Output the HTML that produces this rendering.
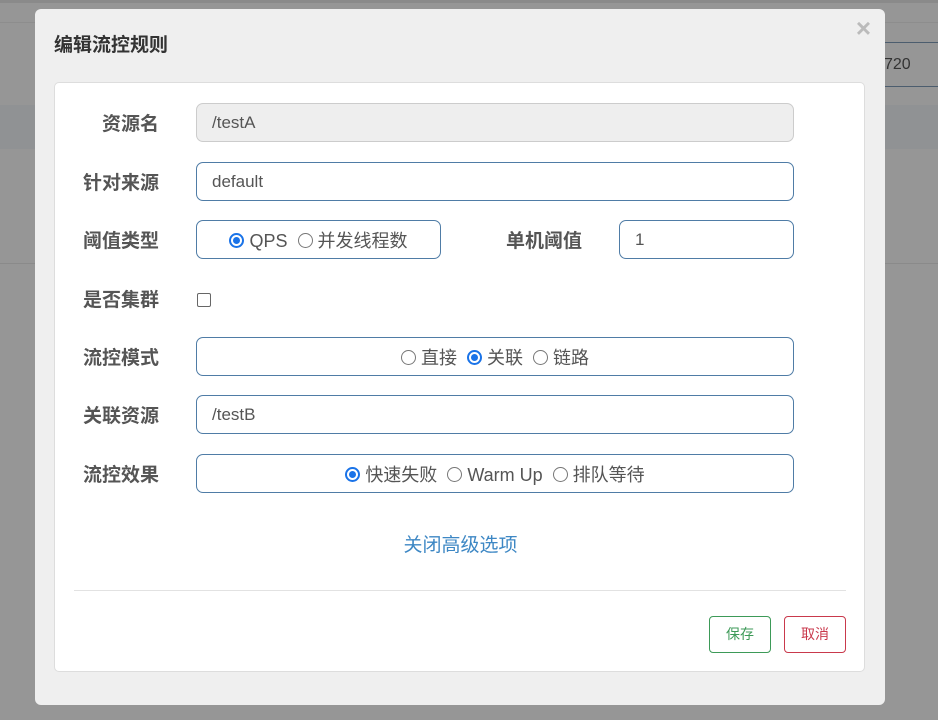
<!DOCTYPE html>
<html><head><meta charset="utf-8"><style>
*{box-sizing:border-box}
body{margin:0;width:938px;height:720px;background:#969696;position:relative;overflow:hidden;font-family:"Liberation Sans","Noto Sans CJK SC",sans-serif;color:#555}
.bg{position:absolute;left:0;right:0}
.modal{position:absolute;left:35px;top:9px;width:850px;height:696px;background:#efefef;border-radius:6px}
.title{position:absolute;left:19px;top:21px;font-size:19px;font-weight:bold;color:#333}
.close{position:absolute;right:14px;top:4px;font-size:26px;color:#bbb;font-weight:bold}
.panel{position:absolute;left:19px;top:73px;width:811px;height:590px;background:#fff;border:1px solid #ddd;border-radius:5px}
.lbl{position:absolute;font-size:19px;font-weight:bold;color:#555;line-height:38px;text-align:right;width:110px;margin-top:3px}
.inp{position:absolute;height:39px;border:1px solid #4f7ca6;border-radius:7px;font-size:17px;line-height:37px;padding-left:15px;color:#555;background:#fff}
.r{display:inline-block;width:15px;height:15px;border:1px solid #777;border-radius:50%;vertical-align:-1px;margin-right:5px;position:relative}
.r.on{border:2px solid #1a73e8}
.r.on:after{content:"";position:absolute;left:2px;top:2px;width:7px;height:7px;border-radius:50%;background:#1a73e8}
.c{text-align:center;padding-left:0;font-size:18px;line-height:40px}
</style></head><body>
<div class="bg" style="top:0;height:3px;background:#8a8a8a"></div>
<div class="bg" style="top:22px;height:1px;background:#8d8d8d"></div>
<div class="bg" style="top:105px;height:44px;background:#909294"></div>
<div class="bg" style="top:263px;height:1px;background:#8a8a8a"></div>
<div style="position:absolute;left:880px;top:42px;width:58px;height:45px;border-top:1px solid #4c5d6e;border-bottom:1px solid #4c5d6e;font-size:16px;color:#333;line-height:44px;padding-left:4px">720</div>
<div class="modal">
<div class="title">编辑流控规则</div>
<div class="close">×</div>
<div class="panel">
<div class="lbl" style="left:-6px;top:20px">资源名</div>
<div class="inp" style="left:141px;top:20px;width:598px;background:#eee;border-color:#ccc">/testA</div>
<div class="lbl" style="left:-6px;top:79px">针对来源</div>
<div class="inp" style="left:141px;top:79px;width:598px">default</div>
<div class="lbl" style="left:-6px;top:137px">阈值类型</div>
<div class="inp c" style="left:141px;top:137px;width:245px"><span class="r on"></span>QPS &nbsp;<span class="r"></span>并发线程数</div>
<div class="lbl" style="left:417px;top:137px">单机阈值</div>
<div class="inp" style="left:564px;top:137px;width:175px">1</div>
<div class="lbl" style="left:-6px;top:196px">是否集群</div>
<div style="position:absolute;left:142px;top:210px;width:14px;height:14px;border:1px solid #666;border-radius:2px"></div>
<div class="lbl" style="left:-6px;top:254px">流控模式</div>
<div class="inp c" style="left:141px;top:254px;width:598px"><span class="r"></span>直接 &nbsp;<span class="r on"></span>关联 &nbsp;<span class="r"></span>链路</div>
<div class="lbl" style="left:-6px;top:312px">关联资源</div>
<div class="inp" style="left:141px;top:312px;width:598px">/testB</div>
<div class="lbl" style="left:-6px;top:371px">流控效果</div>
<div class="inp c" style="left:141px;top:371px;width:598px"><span class="r on"></span>快速失败 &nbsp;<span class="r"></span>Warm Up &nbsp;<span class="r"></span>排队等待</div>
<div style="position:absolute;left:0;width:811px;top:447px;text-align:center;font-size:19px;color:#3d87c4">关闭高级选项</div>
<div style="position:absolute;left:19px;top:507px;width:772px;height:1px;background:#e2e2e2"></div>
<div style="position:absolute;left:654px;top:533px;width:62px;height:37px;border:1px solid #3d9a58;border-radius:4px;color:#3d9a58;font-size:14px;text-align:center;line-height:35px">保存</div>
<div style="position:absolute;left:729px;top:533px;width:62px;height:37px;border:1px solid #c9394c;border-radius:4px;color:#c9394c;font-size:14px;text-align:center;line-height:35px">取消</div>
</div>
</div>
</body></html>
